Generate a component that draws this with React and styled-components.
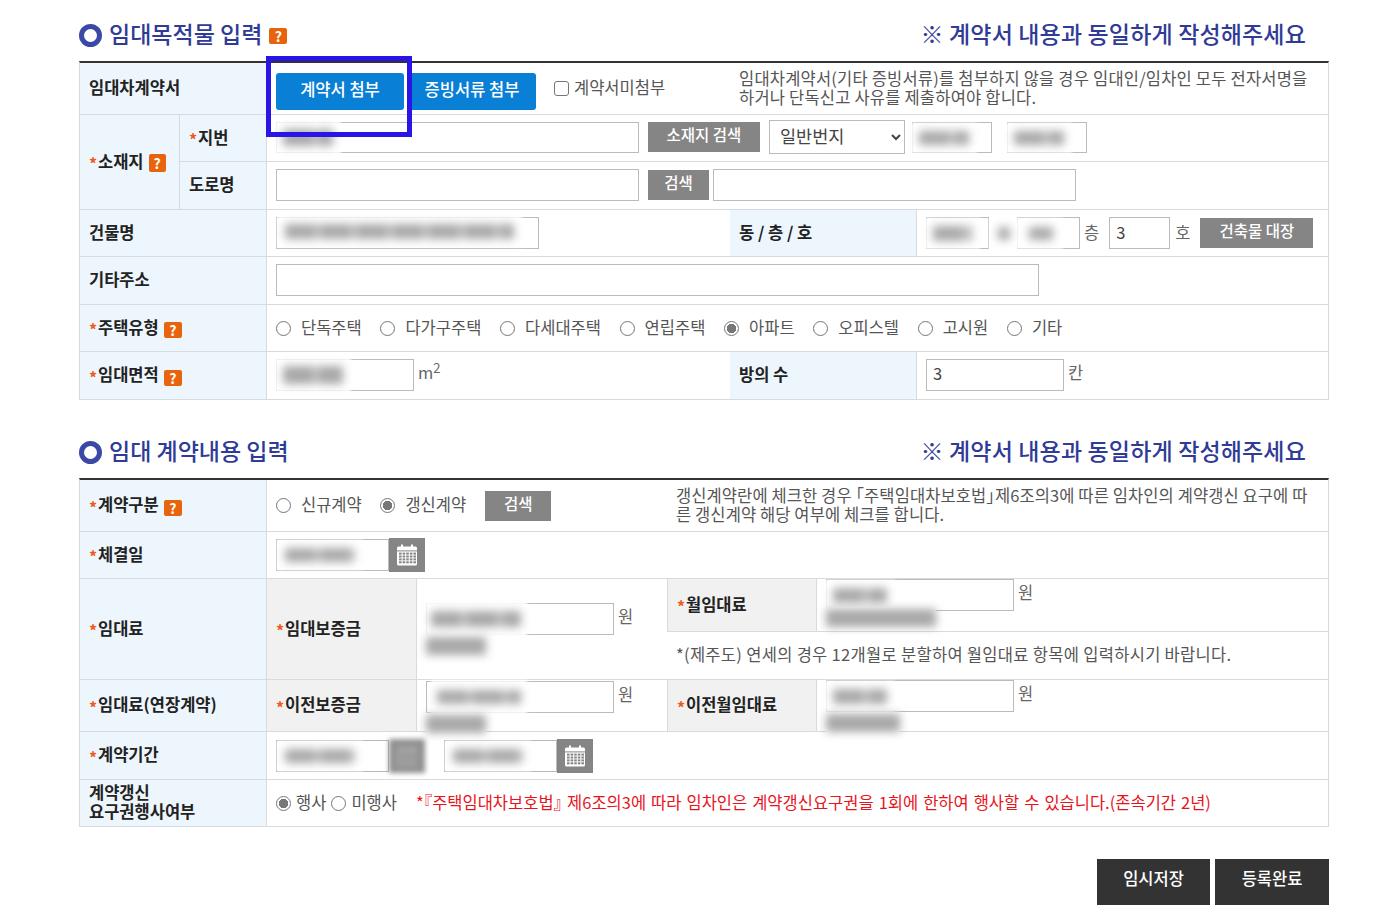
import React from "react"
import styled, { createGlobalStyle } from "styled-components"

const GlobalStyle = createGlobalStyle`
  html, body {
    margin: 0;
    background: #fff;
    font-family: "Noto Sans CJK KR", "Noto Sans", sans-serif;
    color: #555;
    font-size: 16.5px;
  }
  * { box-sizing: border-box; }
`

const Page = styled.div`
  position: relative;
  width: 1377px;
  height: 917px;
  padding: 14px 48px 0 79px;
  overflow: hidden;
`

const Heading = styled.div`
  display: flex;
  align-items: flex-start;
  justify-content: space-between;
  height: 47px;
  margin-top: ${p => p.$mt || 0}px;
  padding-right: 23px;
  color: #2f3b96;
  font-size: 23px;
  font-weight: 500;
  line-height: 38px;
  white-space: nowrap;
`

const HeadLeft = styled.div`
  display: flex;
  align-items: center;
  height: 42px;
`

const HeadText = styled.span`
  padding-bottom: 4px;
`

const HeadNote = styled.span`
  letter-spacing: 0.15px;
`

const Ring = styled.span`
  width: 23px;
  height: 23px;
  margin-right: 7px;
  border: 5px solid #3a48a6;
  border-radius: 50%;
`

const Help = styled.span`
  display: inline-flex;
  align-items: center;
  justify-content: center;
  flex: none;
  width: ${p => p.$w || 18}px;
  height: ${p => p.$h || 16}px;
  margin-left: ${p => p.$ml || 5}px;
  margin-top: ${p => p.$mt ?? 6}px;
  border-radius: 2px;
  background: #e8640c;
  color: #fff;
  font-size: 14px;
  font-weight: 700;
  line-height: 1;
`

const Table = styled.div`
  border-top: 2px solid #333;
  border-left: 1px solid #d5dbe0;
  border-right: 1px solid #d5dbe0;
`

const Row = styled.div`
  display: grid;
  grid-template-columns: ${p => p.$cols};
  grid-template-rows: minmax(0, 1fr);
  height: ${p => p.$h}px;
  border-bottom: 1px solid #d5dbe0;
`

const SubRow = styled(Row)`
  &:last-child { border-bottom: 0; }
`

const Cell = styled.div`
  display: flex;
  align-items: center;
  min-width: 0;
  padding: 0 0 ${p => p.$pb || 0}px 9px;
  white-space: nowrap;
`

const Label = styled(Cell)`
  padding-bottom: 2px;
  background: ${p => (p.$gray ? "#f1f1f1" : "#eef6fd")};
  border-right: 1px solid #d5dbe0;
  border-left: ${p => (p.$edge ? "1px solid #d5dbe0" : "0")};
  color: #222;
  font-weight: 700;
  line-height: 19px;
`

const Star = styled.span`
  display: inline-block;
  width: 9px;
  padding-top: 5px;
  color: #f0591c;
  font-size: 16px;
  font-weight: 700;
`

const Stack = styled.div`
  display: flex;
  flex-direction: column;
  align-items: flex-start;
  min-width: 0;
  padding: ${p => p.$pt || 0}px 0 0 9px;
`

const InputLine = styled.div`
  display: flex;
`

const Split = styled.div`
  display: flex;
  flex-direction: column;
  min-width: 0;
`

const Field = styled.div`
  position: relative;
  flex: none;
  width: ${p => p.$w}px;
  height: ${p => p.$h || 32}px;
  margin-left: ${p => p.$ml || 0}px;
`

const TextInput = styled.input`
  display: block;
  width: 100%;
  height: 100%;
  padding: 0 6px 3px;
  border: 1px solid #bbb;
  background: #fff;
  color: #444;
  font: 16.5px "Noto Sans CJK KR", sans-serif;
  outline: none;
`

/* blurred-out personal values sitting over the inputs */
const Smudge = styled.span`
  position: absolute;
  left: ${p => p.$l}px;
  top: ${p => p.$t}px;
  width: ${p => p.$w}px;
  height: ${p => p.$h}px;
  background: rgba(255, 255, 255, 0.95);
  filter: blur(1.5px);
  &::after {
    content: "";
    position: absolute;
    inset: ${p => p.$inset || "8px 8px"};
    background: repeating-linear-gradient(90deg, #a8a8a8 0 28px, #c6c6c6 32px 36px);
    filter: blur(4.5px);
  }
`

const Amount = styled.span`
  position: relative;
  display: block;
  flex: none;
  width: ${p => p.$w}px;
  height: 22px;
  margin-top: ${p => p.$mt || 0}px;
  background: #fff;
  filter: blur(1px);
  &::after {
    content: "";
    position: absolute;
    inset: 2px 0;
    background: #a8a8a8;
    filter: blur(4px);
  }
`

const GrayButton = styled.button`
  flex: none;
  width: ${p => p.$w}px;
  height: ${p => p.$h || 30}px;
  margin-left: ${p => p.$ml || 0}px;
  padding: 0 0 6px;
  border: 0;
  background: #858585;
  color: #fff;
  font: 500 15.5px "Noto Sans CJK KR", sans-serif;
`

const BlueButton = styled.button`
  flex: none;
  width: 128px;
  height: 37px;
  margin: 5px 4px 0 0;
  padding: 0 0 5px;
  border: 0;
  border-radius: 3px;
  background: #0a7fd6;
  color: #fff;
  font: 500 16.5px "Noto Sans CJK KR", sans-serif;
`

const Controls = styled.div`
  display: flex;
  align-items: center;
  width: ${p => p.$w}px;
  flex: none;
`

const Check = styled.input`
  appearance: none;
  flex: none;
  width: 15px;
  height: 15px;
  margin: 0 5px 0 14px;
  border: 1px solid #767676;
  border-radius: 3px;
  background: #fff;
`

const CheckText = styled.span`
  padding-bottom: 3px;
`

const Note = styled.p`
  margin: 0;
  padding-bottom: 2px;
  color: #555;
  font-size: 16.5px;
  line-height: 19px;
  letter-spacing: ${p => p.$ls || 0}px;
`

/* the full-width corner brackets of this font sit in half an em of blank space */
const Open = styled.span`
  margin-left: -8px;
`

const Close = styled.span`
  margin-right: -8px;
`

const Radios = styled.div`
  display: flex;
  align-items: center;
  gap: ${p => p.$gap ?? 18.7}px;
`

const RadioLabel = styled.label`
  display: flex;
  align-items: center;
  gap: ${p => p.$gap || 10}px;
  padding-bottom: 3px;
  line-height: 20px;
`

const Radio = styled.input`
  appearance: none;
  flex: none;
  width: 15px;
  height: 15px;
  margin: 3px 0 0;
  border: 1px solid #767676;
  border-radius: 50%;
  background: #fff;
  &:checked {
    background: radial-gradient(circle, #777 0 4.5px, #fff 5px);
  }
`

const StyledSelect = styled.select`
  flex: none;
  width: 136px;
  height: 34px;
  margin-left: 9px;
  padding: 0 0 3px 6px;
  border: 1px solid #bbb;
  background: #fff;
  color: #444;
  font: 17.5px "Noto Sans CJK KR", sans-serif;
`

const Unit = styled.span`
  flex: none;
  margin: ${p => p.$m || "0 0 3px 5px"};
  color: #666;
  line-height: 22px;
`

const TopUnit = styled(Unit)`
  align-self: flex-start;
  margin: 2px 0 0 4px;
`

const Sup = styled.sup`
  font-size: 13px;
  line-height: 0;
`

const Calendar = styled.span`
  display: flex;
  align-items: center;
  justify-content: center;
  flex: none;
  width: 36px;
  height: 34px;
  background: #858585;
  filter: ${p => (p.$blurred ? "blur(2.5px) opacity(0.9)" : "none")};
  & > svg {
    opacity: ${p => (p.$blurred ? 0.2 : 1)};
  }
`

const DateGroup = styled.div`
  display: flex;
  align-items: center;
  margin-right: ${p => p.$mr || 0}px;
`

const Red = styled.span`
  margin-left: 19px;
  padding-bottom: 3px;
  color: #e8141c;
  font-size: 16.5px;
  word-spacing: 1.3px;
`

const Footer = styled.div`
  display: flex;
  justify-content: flex-end;
  gap: 5px;
  margin-top: 32px;
`

const DarkButton = styled.button`
  width: ${p => p.$w}px;
  height: 46px;
  padding: 0 0 8px;
  border: 0;
  background: #333;
  color: #fff;
  font: 500 16.5px "Noto Sans CJK KR", sans-serif;
`

const Highlight = styled.div`
  position: absolute;
  left: 266px;
  top: 56px;
  width: 146px;
  height: 81px;
  border: 5px solid #2a14e6;
  pointer-events: none;
`

const CalendarIcon = () => {
  const cells = []
  for (let y = 0; y < 4; y++) {
    for (let x = 0; x < 5; x++) {
      cells.push(<rect key={`${x}-${y}`} x={3 + x * 3.6} y={8.6 + y * 2.9} width="2.6" height="2" fill="#858585" />)
    }
  }
  return (
    <svg width="22" height="22" viewBox="0 0 22 22">
      <rect x="1" y="2.5" width="20" height="19" rx="1.5" fill="#fff" />
      <rect x="5" y="0.5" width="2" height="4" fill="#fff" />
      <rect x="15" y="0.5" width="2" height="4" fill="#fff" />
      <rect x="1" y="6.4" width="20" height="1" fill="#858585" />
      {cells}
    </svg>
  )
}

const Input = ({ w, h, ml, value, children }) => (
  <Field $w={w} $h={h} $ml={ml}>
    <TextInput defaultValue={value} readOnly />
    {children}
  </Field>
)

const DateInput = ({ blurred, mr }) => (
  <DateGroup $mr={mr}>
    <Input w={113} h={32}>
      <Smudge $l={1} $t={1} $w={86} $h={30} />
    </Input>
    <Calendar $blurred={blurred}>
      <CalendarIcon />
    </Calendar>
  </DateGroup>
)

const housing = ["단독주택", "다가구주택", "다세대주택", "연립주택", "아파트", "오피스텔", "고시원", "기타"]

export default function App() {
  return (
    <Page>
      <GlobalStyle />
      <Heading>
        <HeadLeft>
          <Ring />
          <HeadText>임대목적물 입력</HeadText>
          <Help $ml={7} $mt={2}>?</Help>
        </HeadLeft>
        <HeadNote>※ 계약서 내용과 동일하게 작성해주세요</HeadNote>
      </Heading>
      <Table>
        <Row $cols="187px 1fr" $h={52}>
          <Label>임대차계약서</Label>
          <Cell>
            <Controls $w={463}>
              <BlueButton>계약서 첨부</BlueButton>
              <BlueButton>증빙서류 첨부</BlueButton>
              <Check type="checkbox" />
              <CheckText>계약서미첨부</CheckText>
            </Controls>
            <Note $ls={0.2}>
              임대차계약서(기타 증빙서류)를 첨부하지 않을 경우 임대인/임차인 모두 전자서명을
              <br />
              하거나 단독신고 사유를 제출하여야 합니다.
            </Note>
          </Cell>
        </Row>
        <Row $cols="100px 1fr" $h={95}>
          <Label>
            <Star>*</Star>소재지<Help $w={17} $h={18} $mt={3}>?</Help>
          </Label>
          <Split>
            <SubRow $cols="87px 1fr" $h={47}>
              <Label>
                <Star>*</Star>지번
              </Label>
              <Cell $pb={2}>
                <Input w={363} h={31}>
                  <Smudge $l={-1} $t={-1} $w={66} $h={33} />
                </Input>
                <GrayButton $w={112} $ml={9}>소재지 검색</GrayButton>
                <StyledSelect defaultValue="일반번지">
                  <option>일반번지</option>
                </StyledSelect>
                <Input w={80} h={31} ml={7}>
                  <Smudge $l={-1} $t={1} $w={66} $h={30} />
                </Input>
                <Input w={80} h={31} ml={15}>
                  <Smudge $l={-1} $t={1} $w={66} $h={30} />
                </Input>
              </Cell>
            </SubRow>
            <SubRow $cols="87px 1fr" $h={47}>
              <Label>도로명</Label>
              <Cell $pb={2}>
                <Input w={363} />
                <GrayButton $w={61} $ml={9}>검색</GrayButton>
                <Input w={363} ml={4} />
              </Cell>
            </SubRow>
          </Split>
        </Row>
        <Row $cols="187px 463px 187px 1fr" $h={47}>
          <Label>건물명</Label>
          <Cell>
            <Input w={263}>
              <Smudge $l={1} $t={-1} $w={245} $h={31} />
            </Input>
          </Cell>
          <Label>동 / 층 / 호</Label>
          <Cell>
            <Input w={63}>
              <Smudge $l={-1} $t={1} $w={55} $h={31} />
            </Input>
            <Input w={63} ml={28}>
              <Smudge $l={-28} $t={1} $w={30} $h={31} $inset="9px 9px" />
              <Smudge $l={2} $t={1} $w={44} $h={31} $inset="9px 10px" />
            </Input>
            <Unit $m="0 0 3px 4px">층</Unit>
            <Input w={61} ml={10} value="3" />
            <Unit>호</Unit>
            <GrayButton $w={113} $ml={10}>건축물 대장</GrayButton>
          </Cell>
        </Row>
        <Row $cols="187px 1fr" $h={48}>
          <Label>기타주소</Label>
          <Cell $pb={2}>
            <Input w={763} />
          </Cell>
        </Row>
        <Row $cols="187px 1fr" $h={47}>
          <Label>
            <Star>*</Star>주택유형<Help>?</Help>
          </Label>
          <Cell>
            <Radios>
              {housing.map(name => (
                <RadioLabel key={name}>
                  <Radio type="radio" name="housing" defaultChecked={name === "아파트"} />
                  {name}
                </RadioLabel>
              ))}
            </Radios>
          </Cell>
        </Row>
        <Row $cols="187px 463px 187px 1fr" $h={48}>
          <Label>
            <Star>*</Star>임대면적<Help>?</Help>
          </Label>
          <Cell $pb={2}>
            <Input w={138}>
              <Smudge $l={-1} $t={-1} $w={76} $h={34} />
            </Input>
            <Unit $m="0 0 6px 4px">
              m<Sup>2</Sup>
            </Unit>
          </Cell>
          <Label>방의 수</Label>
          <Cell $pb={2}>
            <Input w={138} value="3" />
            <Unit $m="0 0 6px 4px">칸</Unit>
          </Cell>
        </Row>
      </Table>

      <Heading $mt={31}>
        <HeadLeft>
          <Ring />
          <HeadText>임대 계약내용 입력</HeadText>
        </HeadLeft>
        <HeadNote>※ 계약서 내용과 동일하게 작성해주세요</HeadNote>
      </Heading>
      <Table>
        <Row $cols="187px 1fr" $h={52}>
          <Label>
            <Star>*</Star>계약구분<Help>?</Help>
          </Label>
          <Cell>
            <Controls $w={400}>
              <Radios>
                <RadioLabel>
                  <Radio type="radio" name="kind" />
                  신규계약
                </RadioLabel>
                <RadioLabel>
                  <Radio type="radio" name="kind" defaultChecked />
                  갱신계약
                </RadioLabel>
              </Radios>
              <GrayButton $w={66} $ml={19}>검색</GrayButton>
            </Controls>
            <Note $ls={0.1}>
              갱신계약란에 체크한 경우 <Open>「</Open>주택임대차보호법<Close>」</Close>제6조의3에 따른 임차인의 계약갱신 요구에 따
              <br />
              른 갱신계약 해당 여부에 체크를 합니다.
            </Note>
          </Cell>
        </Row>
        <Row $cols="187px 1fr" $h={47}>
          <Label>
            <Star>*</Star>체결일
          </Label>
          <Cell>
            <DateInput />
          </Cell>
        </Row>
        <Row $cols="187px 150px 250px 1fr" $h={101}>
          <Label>
            <Star>*</Star>임대료
          </Label>
          <Label $gray>
            <Star>*</Star>임대보증금
          </Label>
          <Stack $pt={24}>
            <InputLine>
              <Input w={188}>
                <Smudge $l={-1} $t={-2} $w={102} $h={36} $inset="10px 6px" />
              </Input>
              <TopUnit>원</TopUnit>
            </InputLine>
            <Amount $w={60} />
          </Stack>
          <Split>
            <SubRow $cols="150px 1fr" $h={53}>
              <Label $gray $edge>
                <Star>*</Star>월임대료
              </Label>
              <Stack>
                <InputLine>
                  <Input w={188}>
                    <Smudge $l={-1} $t={1} $w={70} $h={31} />
                  </Input>
                  <TopUnit>원</TopUnit>
                </InputLine>
                <Amount $w={110} $mt={-4} />
              </Stack>
            </SubRow>
            <SubRow $cols="1fr" $h={47}>
              <Cell>
                <Note $ls={0.3}>*(제주도) 연세의 경우 12개월로 분할하여 월임대료 항목에 입력하시기 바랍니다.</Note>
              </Cell>
            </SubRow>
          </Split>
        </Row>
        <Row $cols="187px 150px 250px 150px 1fr" $h={52}>
          <Label>
            <Star>*</Star>임대료(연장계약)
          </Label>
          <Label $gray>
            <Star>*</Star>이전보증금
          </Label>
          <Stack $pt={1}>
            <InputLine>
              <Input w={188}>
                <Smudge $l={5} $t={-1} $w={96} $h={34} $inset="10px 6px" />
              </Input>
              <TopUnit>원</TopUnit>
            </InputLine>
            <Amount $w={60} />
          </Stack>
          <Label $gray $edge>
            <Star>*</Star>이전월임대료
          </Label>
          <Stack>
            <InputLine>
              <Input w={188}>
                <Smudge $l={-1} $t={1} $w={70} $h={31} />
              </Input>
              <TopUnit>원</TopUnit>
            </InputLine>
            <Amount $w={74} />
          </Stack>
        </Row>
        <Row $cols="187px 1fr" $h={48}>
          <Label>
            <Star>*</Star>계약기간
          </Label>
          <Cell>
            <DateInput blurred mr={19} />
            <DateInput />
          </Cell>
        </Row>
        <Row $cols="187px 1fr" $h={47}>
          <Label>
            계약갱신
            <br />
            요구권행사여부
          </Label>
          <Cell>
            <Radios $gap={5}>
              <RadioLabel $gap={5}>
                <Radio type="radio" name="renew" defaultChecked />
                행사
              </RadioLabel>
              <RadioLabel $gap={5}>
                <Radio type="radio" name="renew" />
                미행사
              </RadioLabel>
            </Radios>
            <Red>
              *<Open>『</Open>주택임대차보호법<Close>』</Close> 제6조의3에 따라 임차인은 계약갱신요구권을 1회에 한하여 행사할 수 있습니다.(존속기간 2년)
            </Red>
          </Cell>
        </Row>
      </Table>
      <Footer>
        <DarkButton $w={113}>임시저장</DarkButton>
        <DarkButton $w={114}>등록완료</DarkButton>
      </Footer>
      <Highlight />
    </Page>
  )
}
